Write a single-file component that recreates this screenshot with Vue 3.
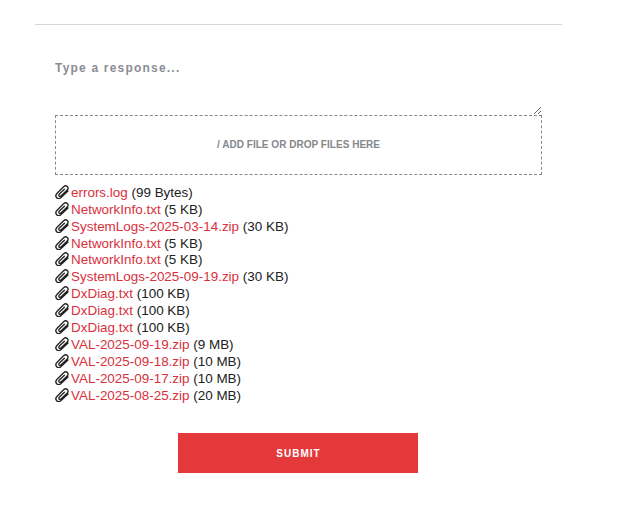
<script setup>
const files = [
  ['errors.log', '99 Bytes'],
  ['NetworkInfo.txt', '5 KB'],
  ['SystemLogs-2025-03-14.zip', '30 KB'],
  ['NetworkInfo.txt', '5 KB'],
  ['NetworkInfo.txt', '5 KB'],
  ['SystemLogs-2025-09-19.zip', '30 KB'],
  ['DxDiag.txt', '100 KB'],
  ['DxDiag.txt', '100 KB'],
  ['DxDiag.txt', '100 KB'],
  ['VAL-2025-09-19.zip', '9 MB'],
  ['VAL-2025-09-18.zip', '10 MB'],
  ['VAL-2025-09-17.zip', '10 MB'],
  ['VAL-2025-08-25.zip', '20 MB']
]
</script>

<template>
  <div class="page">
    <hr class="rule" />
    <form class="form" @submit.prevent>
      <textarea class="response" placeholder="Type a response..."></textarea>
      <div class="drop"><span class="drop-label">/ ADD FILE OR DROP FILES HERE</span></div>
      <ul class="files">
        <li v-for="(f, i) in files" :key="i" class="file">
          <svg class="clip" viewBox="0 0 14 14" width="14" height="14" aria-hidden="true">
            <path d="M13 6 6.300 12.400C4.800 13.800 2.900 13.900 1.700 12.700.500 11.500.700 9.600 2.100 8.200L8.600 1.800C9.800.600 11.300.500 12.300 1.500 13.300 2.500 13.200 4 12 5.200L6.200 10.800C5.500 11.500 4.600 11.600 4.100 11.100 3.600 10.600 3.700 9.700 4.400 9L9.400 4.200" fill="none" stroke="#222" stroke-width="1.300" stroke-linecap="round" stroke-linejoin="round"/>
          </svg>
          <a class="name" href="#" @click.prevent>{{ f[0] }}</a> ({{ f[1] }})
        </li>
      </ul>
      <div class="actions">
        <button class="submit" type="submit">SUBMIT</button>
      </div>
    </form>
  </div>
</template>

<style>
html, body { margin: 0; background: #fff; }
</style>

<style scoped>
.page {
  width: 643px;
  height: 515px;
  overflow: hidden;
  padding: 24px 0 0 35px;
  box-sizing: border-box;
  font-family: "Liberation Sans", Arial, sans-serif;
}
.rule {
  width: 527px;
  height: 1px;
  margin: 0;
  border: 0;
  background: #d6d6d6;
}
.form {
  width: 487px;
  margin-left: 20px;
  display: flex;
  flex-direction: column;
}
.response {
  display: block;
  width: 487px;
  height: 90px;
  box-sizing: border-box;
  border: 0;
  outline: 0;
  padding: 36px 0 0;
  margin: 0;
  resize: vertical;
  font-family: inherit;
  font-size: 12px;
  font-weight: 700;
  letter-spacing: 1.2px;
  color: #333;
}
.response::placeholder { color: #8a8d93; opacity: 1; }
.drop {
  height: 60px;
  box-sizing: border-box;
  border: 1px dashed #85888c;
  padding-bottom: 2px;
  display: flex;
  align-items: center;
  justify-content: center;
  font-size: 10px;
  font-weight: 700;
  letter-spacing: 0.03px;
  color: #85888c;
}
.files {
  list-style: none;
  margin: 9.8px 0 0;
  padding: 0;
  font-size: 13.44px;
  line-height: 16.9px;
  color: #212121;
}
.file { white-space: nowrap; }
.clip {
  display: inline-block;
  vertical-align: -2px;
  margin-right: 2px;
}
.name { color: #d9303c; text-decoration: none; }
.actions {
  margin-top: 28.7px;
  padding-left: 123px;
}
.submit {
  display: block;
  width: 240px;
  height: 40px;
  border: 0;
  padding: 0 0 0 1px;
  background: #e5383b;
  color: #fff;
  font-family: inherit;
  font-size: 10px;
  font-weight: 700;
  letter-spacing: 1px;
}
</style>
